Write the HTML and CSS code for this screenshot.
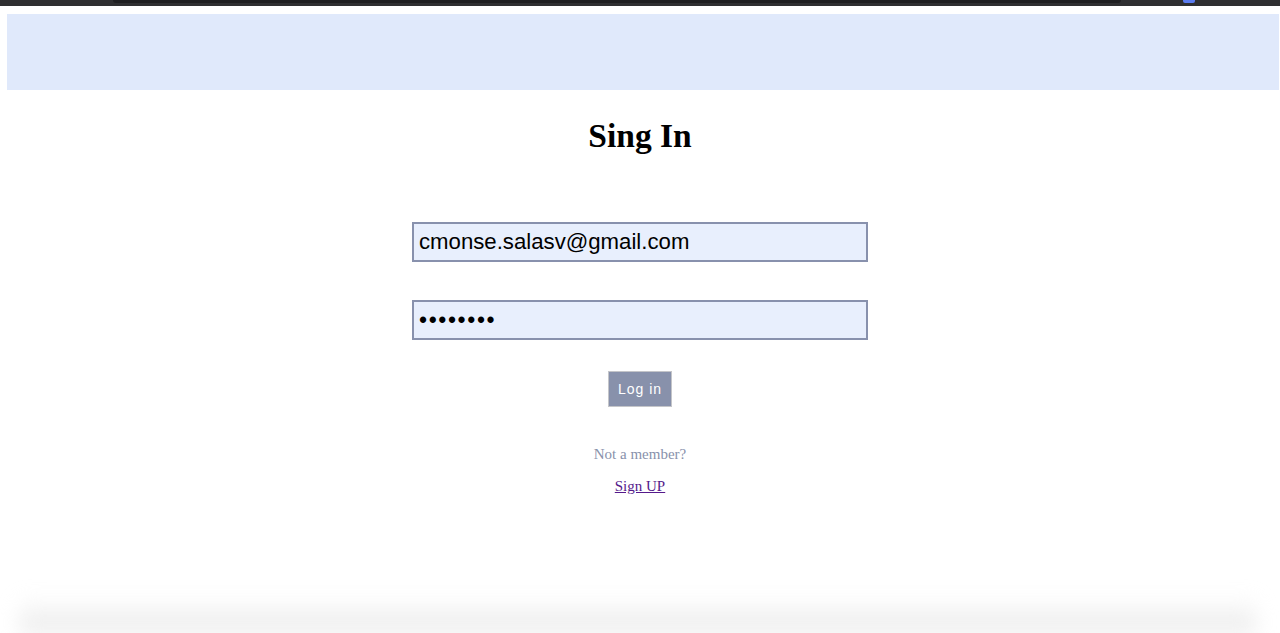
FILE: index.html
```html
<!DOCTYPE html>
<html lang="en">
<head>
<meta charset="utf-8">
<title>Sing In</title>
<link rel="stylesheet" href="styles.css">
</head>
<body>
<div class="chrome">
  <div class="chrome-bar"></div>
  <div class="chrome-dot"></div>
</div>
<div class="page">
  <header class="banner"></header>
  <main class="login">
    <h1 class="title">Sing In</h1>
    <form class="form">
      <input class="field" type="email" value="cmonse.salasv@gmail.com">
      <input class="field field-pass" type="password" value="12345678">
      <button class="btn" type="button">Log in</button>
    </form>
    <p class="note">Not a member?</p>
    <a class="signup" href="#">Sign UP</a>
  </main>
  <div class="shade"></div>
</div>
</body>
</html>
```
FILE: styles.css
```css
html, body {
  margin: 0;
  padding: 0;
  background: #ffffff;
}
body {
  height: 633px;
  overflow: hidden;
  display: flex;
  flex-direction: column;
  font-family: "Liberation Serif", "Times New Roman", serif;
}
.chrome {
  height: 6px;
  background: #2f2f31;
  display: flex;
  align-items: flex-start;
  flex: none;
}
.chrome-bar {
  margin-left: 113px;
  width: 1008px;
  height: 3px;
  background: #1f1f21;
  border-radius: 0 0 6px 6px;
}
.chrome-dot {
  margin-left: 62px;
  width: 12px;
  height: 3px;
  background: #5b7cf0;
  border-radius: 0 0 2px 2px;
}
.page {
  flex: 1;
  display: flex;
  flex-direction: column;
  padding-top: 8px;
}
.banner {
  height: 76px;
  margin: 0 1px 0 7px;
  background: #e0e9fb;
  flex: none;
}
.login {
  flex: 1;
  display: flex;
  flex-direction: column;
  align-items: center;
}
.title {
  margin: 23px 0 0;
  font-size: 33.5px;
  font-weight: bold;
  line-height: 45px;
  color: #000;
}
.form {
  display: flex;
  flex-direction: column;
  align-items: center;
  margin-top: 64px;
}
.field {
  box-sizing: border-box;
  width: 456px;
  height: 40px;
  border: 2px solid #8891ad;
  background: #e8effd;
  padding: 0 5px;
  font-family: "Liberation Sans", Arial, sans-serif;
  font-size: 22.2px;
  color: #000;
  margin: 0 0 38px;
  outline: none;
}
.field-pass {
  font-size: 23px;
  letter-spacing: 1.6px;
}
.btn {
  margin-top: -7px;
  width: 64px;
  height: 36px;
  background: #8891ab;
  border: 1px solid #c4c5c9;
  color: #fff;
  font-family: "Liberation Sans", Arial, sans-serif;
  font-size: 14px;
  letter-spacing: 1px;
  padding: 0;
}
.note {
  margin: 39px 0 0;
  font-size: 15px;
  color: #8891ab;
}
.signup {
  margin-top: 15px;
  font-size: 15px;
  color: #551a8b;
}
.shade {
  height: 36px;
  margin: 0 24px 0 20px;
  flex: none;
  background: linear-gradient(to bottom, rgba(255,255,255,0), rgba(232,232,232,1));
  filter: blur(10px);
}
```
